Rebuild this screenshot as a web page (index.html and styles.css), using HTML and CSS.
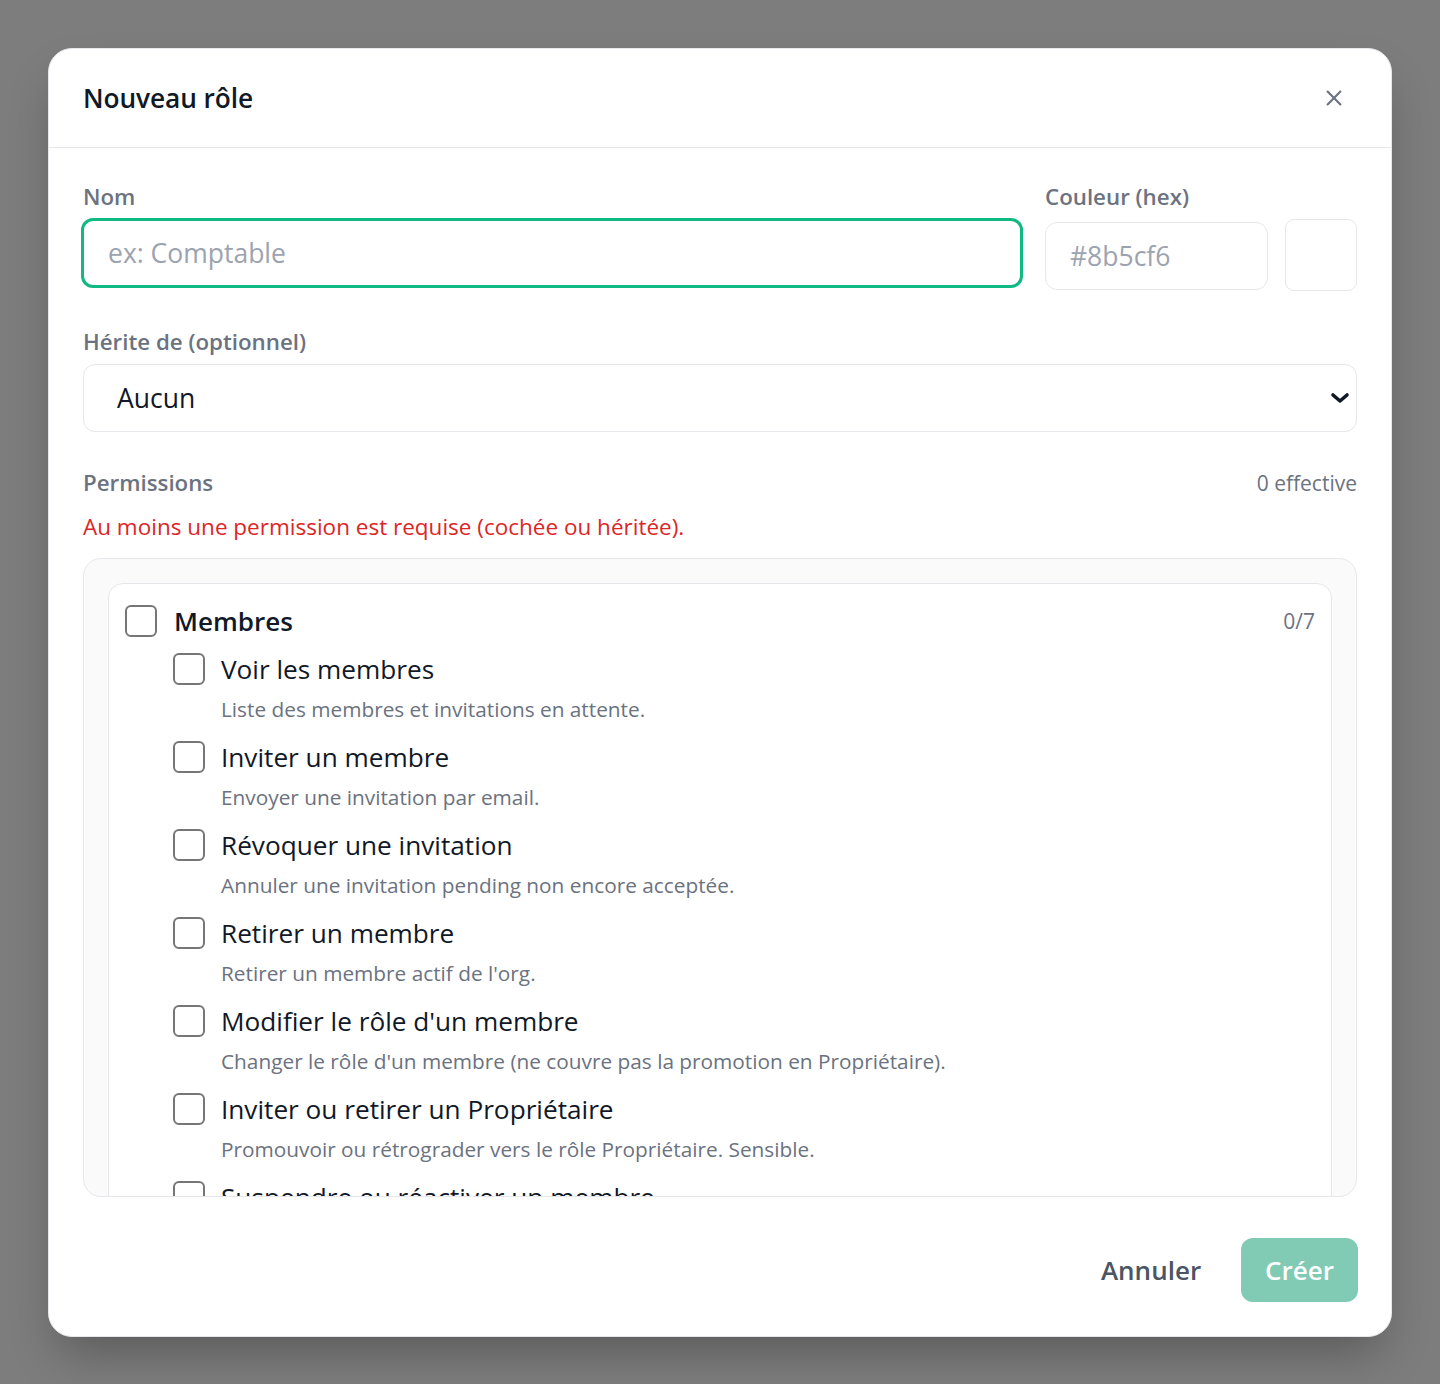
FILE: index.html
```html
<!DOCTYPE html>
<html lang="fr">
<head>
<meta charset="utf-8">
<title>Nouveau rôle</title>
<link rel="stylesheet" href="styles.css">
</head>
<body>
<div class="overlay">
  <div class="modal">
    <div class="modal-header">
      <h2 class="modal-title">Nouveau rôle</h2>
      <button class="close-btn" aria-label="Fermer">
        <svg width="22" height="22" viewBox="0 0 24 24" fill="none" stroke="currentColor" stroke-width="2.3" stroke-linecap="round"><path d="M5 5l14 14M19 5L5 19"/></svg>
      </button>
    </div>
    <div class="modal-body">
      <div class="row-top">
        <div class="field field-grow">
          <label class="label">Nom</label>
          <div class="input input-focus"><span class="placeholder">ex: Comptable</span></div>
        </div>
        <div class="field">
          <label class="label">Couleur (hex)</label>
          <div class="color-row">
            <div class="input input-hex"><span class="placeholder">#8b5cf6</span></div>
            <div class="swatch"></div>
          </div>
        </div>
      </div>

      <div class="field section">
        <label class="label">Hérite de (optionnel)</label>
        <div class="select">
          <span class="select-value">Aucun</span>
          <svg class="chevron" width="20" height="14" viewBox="0 0 20 14" fill="none" stroke="#111827" stroke-width="3.6" stroke-linecap="round" stroke-linejoin="round"><path d="M3 4l7 6 7-6"/></svg>
        </div>
      </div>

      <div class="section">
        <div class="perm-head">
          <span class="label label-plain">Permissions</span>
          <span class="perm-count">0 effective</span>
        </div>
        <p class="error">Au moins une permission est requise (cochée ou héritée).</p>
        <div class="perm-box">
          <div class="group">
            <div class="group-head">
              <span class="checkbox"></span>
              <span class="group-name">Membres</span>
              <span class="group-count">0/7</span>
            </div>
            <div class="items">
              <div class="item">
                <div class="item-line"><span class="checkbox"></span><span class="item-name">Voir les membres</span></div>
                <div class="item-desc">Liste des membres et invitations en attente.</div>
              </div>
              <div class="item">
                <div class="item-line"><span class="checkbox"></span><span class="item-name">Inviter un membre</span></div>
                <div class="item-desc">Envoyer une invitation par email.</div>
              </div>
              <div class="item">
                <div class="item-line"><span class="checkbox"></span><span class="item-name">Révoquer une invitation</span></div>
                <div class="item-desc">Annuler une invitation pending non encore acceptée.</div>
              </div>
              <div class="item">
                <div class="item-line"><span class="checkbox"></span><span class="item-name">Retirer un membre</span></div>
                <div class="item-desc">Retirer un membre actif de l'org.</div>
              </div>
              <div class="item">
                <div class="item-line"><span class="checkbox"></span><span class="item-name">Modifier le rôle d'un membre</span></div>
                <div class="item-desc">Changer le rôle d'un membre (ne couvre pas la promotion en Propriétaire).</div>
              </div>
              <div class="item">
                <div class="item-line"><span class="checkbox"></span><span class="item-name">Inviter ou retirer un Propriétaire</span></div>
                <div class="item-desc">Promouvoir ou rétrograder vers le rôle Propriétaire. Sensible.</div>
              </div>
              <div class="item">
                <div class="item-line"><span class="checkbox"></span><span class="item-name">Suspendre ou réactiver un membre</span></div>
              </div>
            </div>
          </div>
        </div>
      </div>
    </div>
    <div class="modal-footer">
      <button class="btn btn-ghost">Annuler</button>
      <button class="btn btn-primary">Créer</button>
    </div>
  </div>
</div>
</body>
</html>
```
FILE: styles.css
```css
* { box-sizing: border-box; }
html, body { margin: 0; padding: 0; }
body {
  background: #7d7d7d;
  font-family: "Open Sans", "Noto Sans", sans-serif;
  color: #111827;
  width: 1440px;
  height: 1384px;
  overflow: hidden;
}
.overlay {
  padding: 48px;
}
.modal {
  width: 1344px;
  background: #fff;
  border: 1.5px solid #e5e7eb;
  border-radius: 24px;
  box-shadow: 0 25px 50px -12px rgba(0,0,0,0.3);
  overflow: hidden;
}
.modal-header {
  height: 99px;
  padding: 0 34px;
  display: flex;
  align-items: center;
  justify-content: space-between;
  border-bottom: 1.5px solid #e5e7eb;
}
.modal-title {
  margin: 0;
  font-size: 26.3px;
  font-weight: 600;
  color: #111827;
  letter-spacing: -0.1px;
}
.close-btn {
  background: none;
  border: 0;
  padding: 0;
  margin-right: 12px;
  color: #6b7280;
  display: flex;
}
.modal-body {
  padding: 34px 34px 0;
}
.row-top {
  display: flex;
  gap: 24px;
}
.field { display: flex; flex-direction: column; }
.field-grow { flex: 1; }
.label {
  font-size: 22.3px;
  line-height: 30px;
  font-weight: 600;
  color: #6b7280;
  margin-bottom: 7px;
}
.label-plain { margin-bottom: 0; }
.input {
  height: 68px;
  border: 1.5px solid #e5e7eb;
  border-radius: 12px;
  display: flex;
  align-items: center;
  padding: 0 24px;
  font-size: 26.5px;
}
.input-focus {
  border: 3px solid #10b981;
  padding-left: 24px;
  height: 70px;
  margin: -1px -2px 0 -2px;
}
.placeholder { color: #9ca3af; }
.color-row { display: flex; gap: 17px; align-items: center; }
.input-hex { width: 223px; margin-top: 2px; }
.swatch {
  width: 72px;
  height: 72px;
  border: 1.5px solid #e5e7eb;
  border-radius: 9px;
  background: #fff;
}
.section { margin-top: 36px; }
.select {
  height: 68px;
  border: 1.5px solid #e5e7eb;
  border-radius: 12px;
  display: flex;
  align-items: center;
  justify-content: space-between;
  padding: 0 6px 0 33px;
  font-size: 26.5px;
  color: #111827;
}
.perm-head {
  display: flex;
  justify-content: space-between;
  align-items: center;
}
.perm-count {
  font-size: 21px;
  color: #6b7280;
}
.error {
  margin: 14px 0 0;
  font-size: 22.5px;
  line-height: 30px;
  color: #dc2626;
}
.perm-box {
  margin-top: 16px;
  height: 639px;
  overflow: hidden;
  background: #fafafa;
  border: 1.5px solid #e5e7eb;
  border-radius: 18px;
  padding: 24px 24px 0;
}
.group {
  background: #fff;
  border: 1.5px solid #e5e7eb;
  border-radius: 15px;
  padding: 17px 16px 20px;
}
.group-head {
  display: flex;
  align-items: center;
  height: 40px;
}
.checkbox {
  width: 32px;
  height: 32px;
  flex: none;
  border: 2px solid #767676;
  border-radius: 6px;
  background: #fff;
}
.group-name {
  margin-left: 17px;
  font-size: 26px;
  font-weight: 600;
  flex: 1;
}
.group-count {
  font-size: 21px;
  color: #6b7280;
}
.items {
  margin-top: 8px;
  padding-left: 48px;
  display: flex;
  flex-direction: column;
  gap: 13px;
}
.item-line {
  display: flex;
  align-items: center;
  height: 40px;
}
.item-name {
  margin-left: 16px;
  font-size: 26.2px;
  color: #111827;
}
.item-desc {
  margin-top: 5px;
  padding-left: 48px;
  font-size: 20.8px;
  line-height: 30px;
  color: #6b7280;
}
.modal-footer {
  display: flex;
  justify-content: flex-end;
  gap: 16px;
  padding: 41px 33px 34px;
}
.btn {
  font-family: inherit;
  height: 64px;
  padding: 0 24px;
  border: 0;
  border-radius: 12px;
  font-size: 26px;
  font-weight: 600;
}
.btn-ghost {
  background: transparent;
  color: #4b5563;
}
.btn-primary {
  background: #059669;
  opacity: 0.5;
  color: #fff;
}
```
